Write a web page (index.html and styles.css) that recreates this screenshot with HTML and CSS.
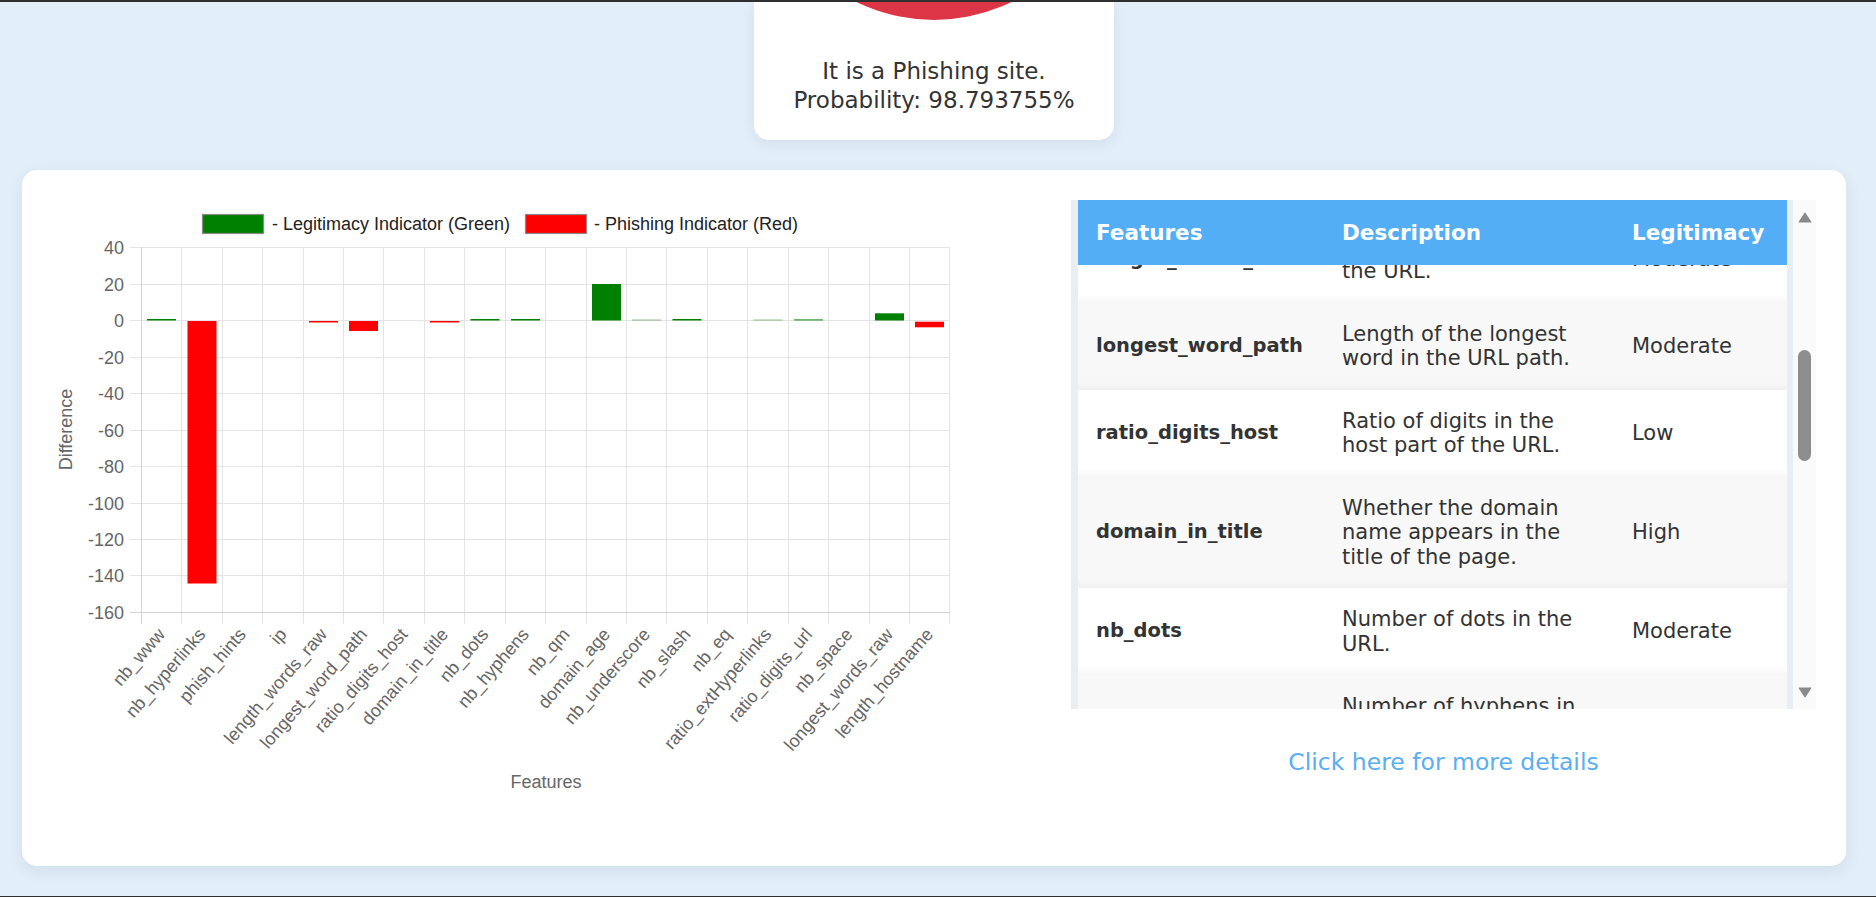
FILE: index.html
```html
<!DOCTYPE html>
<html lang="en">
<head>
<meta charset="utf-8">
<title>Phishing result</title>
<link rel="stylesheet" href="styles.css">
</head>
<body>
<div class="frame">
  <section class="result-card">
    <div class="gauge"></div>
    <p class="verdict">It is a Phishing site.<br>Probability: 98.793755%</p>
  </section>

  <section class="main-card">
    <div class="chart-col">
      <svg class="chart" width="908" height="636" viewBox="0 0 908 636">
        <!-- legend -->
        <rect x="156.5" y="14.5" width="61" height="19" fill="#008000" stroke="#8a8a8a" stroke-width="1.2"/>
        <text class="legend-text" x="226" y="24">- Legitimacy Indicator (Green)</text>
        <rect x="479.5" y="14.5" width="61" height="19" fill="#ff0000" stroke="#8a8a8a" stroke-width="1.2"/>
        <text class="legend-text" x="548" y="24">- Phishing Indicator (Red)</text>

        <!-- grid -->
        <g class="grid">
          <line x1="95.5" y1="47" x2="95.5" y2="424"/>
          <line x1="135.5" y1="47" x2="135.5" y2="424"/>
          <line x1="176.5" y1="47" x2="176.5" y2="424"/>
          <line x1="216.5" y1="47" x2="216.5" y2="424"/>
          <line x1="257.5" y1="47" x2="257.5" y2="424"/>
          <line x1="297.5" y1="47" x2="297.5" y2="424"/>
          <line x1="337.5" y1="47" x2="337.5" y2="424"/>
          <line x1="378.5" y1="47" x2="378.5" y2="424"/>
          <line x1="418.5" y1="47" x2="418.5" y2="424"/>
          <line x1="459.5" y1="47" x2="459.5" y2="424"/>
          <line x1="499.5" y1="47" x2="499.5" y2="424"/>
          <line x1="540.5" y1="47" x2="540.5" y2="424"/>
          <line x1="580.5" y1="47" x2="580.5" y2="424"/>
          <line x1="620.5" y1="47" x2="620.5" y2="424"/>
          <line x1="661.5" y1="47" x2="661.5" y2="424"/>
          <line x1="701.5" y1="47" x2="701.5" y2="424"/>
          <line x1="742.5" y1="47" x2="742.5" y2="424"/>
          <line x1="782.5" y1="47" x2="782.5" y2="424"/>
          <line x1="823.5" y1="47" x2="823.5" y2="424"/>
          <line x1="863.5" y1="47" x2="863.5" y2="424"/>
          <line x1="903.5" y1="47" x2="903.5" y2="424"/>

          <line x1="84" y1="47.5" x2="904" y2="47.5"/>
          <line x1="84" y1="84.5" x2="904" y2="84.5"/>
          <line x1="84" y1="120.5" x2="904" y2="120.5"/>
          <line x1="84" y1="157.5" x2="904" y2="157.5"/>
          <line x1="84" y1="193.5" x2="904" y2="193.5"/>
          <line x1="84" y1="230.5" x2="904" y2="230.5"/>
          <line x1="84" y1="266.5" x2="904" y2="266.5"/>
          <line x1="84" y1="303.5" x2="904" y2="303.5"/>
          <line x1="84" y1="339.5" x2="904" y2="339.5"/>
          <line x1="84" y1="375.5" x2="904" y2="375.5"/>
        </g>
        <g class="axis">
          <line x1="95.5" y1="47" x2="95.5" y2="424"/>
          <line x1="84" y1="412.5" x2="904" y2="412.5"/>
        </g>

        <!-- bars -->
        <g class="bars">
          <rect class="pos" x="101" y="119" width="29" height="1.5"/>
          <rect class="neg" x="141.5" y="121" width="29" height="262.5"/>
          <rect class="neg" x="263" y="121" width="29" height="1.5"/>
          <rect class="neg" x="303" y="121" width="29" height="10"/>
          <rect class="neg" x="384" y="121" width="29" height="1.5"/>
          <rect class="pos" x="424.5" y="119" width="29" height="1.5"/>
          <rect class="pos" x="465" y="119" width="29" height="1.5"/>
          <rect class="pos" x="546" y="84" width="29" height="36.5"/>
          <rect class="pos faint" x="586" y="119.5" width="29" height="1"/>
          <rect class="pos" x="626.5" y="119" width="29" height="1.5"/>
          <rect class="pos faint" x="707.5" y="119.5" width="29" height="1"/>
          <rect class="pos soft" x="748" y="119.3" width="29" height="1.2"/>
          <rect class="pos" x="829" y="113.3" width="29" height="7.2"/>
          <rect class="neg" x="869" y="121.7" width="29" height="5.6"/>
        </g>

        <!-- y ticks -->
        <g class="ytick">
          <text x="78" y="47.5">40</text>
          <text x="78" y="84.5">20</text>
          <text x="78" y="120.5">0</text>
          <text x="78" y="157.5">-20</text>
          <text x="78" y="193.5">-40</text>
          <text x="78" y="230.5">-60</text>
          <text x="78" y="266.5">-80</text>
          <text x="78" y="303.5">-100</text>
          <text x="78" y="339.5">-120</text>
          <text x="78" y="375.5">-140</text>
          <text x="78" y="412.5">-160</text>
        </g>

        <!-- x ticks -->
        <g class="xtick">
          <text transform="translate(115.5 431) rotate(-49)">nb_www</text>
          <text transform="translate(156 431) rotate(-49)">nb_hyperlinks</text>
          <text transform="translate(196.5 431) rotate(-49)">phish_hints</text>
          <text transform="translate(237 431) rotate(-49)">ip</text>
          <text transform="translate(277.5 431) rotate(-49)">length_words_raw</text>
          <text transform="translate(317.5 431) rotate(-49)">longest_word_path</text>
          <text transform="translate(358 431) rotate(-49)">ratio_digits_host</text>
          <text transform="translate(398.5 431) rotate(-49)">domain_in_title</text>
          <text transform="translate(439 431) rotate(-49)">nb_dots</text>
          <text transform="translate(479.5 431) rotate(-49)">nb_hyphens</text>
          <text transform="translate(520 431) rotate(-49)">nb_qm</text>
          <text transform="translate(560.5 431) rotate(-49)">domain_age</text>
          <text transform="translate(600.5 431) rotate(-49)">nb_underscore</text>
          <text transform="translate(641 431) rotate(-49)">nb_slash</text>
          <text transform="translate(681.5 431) rotate(-49)">nb_eq</text>
          <text transform="translate(722 431) rotate(-49)">ratio_extHyperlinks</text>
          <text transform="translate(762.5 431) rotate(-49)">ratio_digits_url</text>
          <text transform="translate(803 431) rotate(-49)">nb_space</text>
          <text transform="translate(843.5 431) rotate(-49)">longest_words_raw</text>
          <text transform="translate(883.5 431) rotate(-49)">length_hostname</text>
        </g>

        <text class="axis-title" transform="translate(20 229.5) rotate(-90)">Difference</text>
        <text class="axis-title" x="500" y="581.5">Features</text>
      </svg>
    </div>

    <div class="table-col">
      <div class="table-box">
        <div class="table-view">
          <div class="thead">
            <span>Features</span>
            <span>Description</span>
            <span>Legitimacy</span>
          </div>
          <div class="tbody">
            <div class="row">
              <div class="feat">length_words_raw</div>
              <div>Count of raw words in the URL.</div>
              <div>Moderate</div>
            </div>
            <div class="row">
              <div class="feat">longest_word_path</div>
              <div>Length of the longest word in the URL path.</div>
              <div>Moderate</div>
            </div>
            <div class="row">
              <div class="feat">ratio_digits_host</div>
              <div>Ratio of digits in the host part of the URL.</div>
              <div>Low</div>
            </div>
            <div class="row">
              <div class="feat">domain_in_title</div>
              <div>Whether the domain name appears in the title of the page.</div>
              <div>High</div>
            </div>
            <div class="row">
              <div class="feat">nb_dots</div>
              <div>Number of dots in the URL.</div>
              <div>Moderate</div>
            </div>
            <div class="row">
              <div class="feat">nb_hyphens</div>
              <div>Number of hyphens in the URL.</div>
              <div>Moderate</div>
            </div>
          </div>
        </div>
        <div class="scrollbar">
          <svg class="sb-up" width="14" height="11" viewBox="0 0 14 11"><path d="M7 1.2 L12.8 10 H1.2 Z"/></svg>
          <div class="sb-thumb"></div>
          <svg class="sb-down" width="14" height="11" viewBox="0 0 14 11"><path d="M7 9.8 L12.8 1 H1.2 Z"/></svg>
        </div>
      </div>
      <a class="more-link" href="#">Click here for more details</a>
    </div>
  </section>
</div>
</body>
</html>
```

FILE: styles.css
```css
html, body {
  margin: 0;
  padding: 0;
}

body {
  background: #e2eef8;
  font-family: "DejaVu Sans", "Liberation Sans", sans-serif;
  color: #333;
}

.frame {
  height: 894px;
  border-top: 2px solid #2f2f2f;
  border-bottom: 1px solid #2f2f2f;
  padding: 0 30px 0 22px;
  overflow: hidden;
}

/* top result card */
.result-card {
  width: 360px;
  height: 138px;
  margin-left: 732px;
  background: #fff;
  border-radius: 0 0 15px 15px;
  box-shadow: 0 4px 14px rgba(40, 80, 120, 0.08);
  overflow: hidden;
}

.gauge {
  width: 352px;
  height: 352px;
  margin: -334px auto 0;
  border-radius: 50%;
  background: #dc3545;
}

.verdict {
  margin: 36.5px 0 0;
  text-align: center;
  font-size: 23px;
  line-height: 29px;
  color: #333;
}

/* main card */
.main-card {
  margin-top: 30px;
  height: 636px;
  padding: 30px 30px 30px 24px;
  background: #fff;
  border-radius: 15px;
  box-shadow: 0 5px 16px rgba(40, 80, 120, 0.09);
  display: grid;
  grid-template-columns: 908px 745px;
  column-gap: 117px;
}

/* chart */
.chart {
  display: block;
}

.chart text {
  font-family: "Liberation Sans", Arial, sans-serif;
  font-size: 18px;
  fill: #666;
}

.chart .legend-text {
  fill: #222;
  dominant-baseline: central;
}

.grid line {
  stroke: #e4e4e4;
  stroke-width: 1;
  shape-rendering: crispEdges;
}

.axis line {
  stroke: #d4d4d4;
  stroke-width: 1;
  shape-rendering: crispEdges;
}

.bars .pos {
  fill: #008000;
}

.bars .neg {
  fill: #ff0000;
}

.bars .faint {
  opacity: 0.45;
}

.bars .soft {
  opacity: 0.8;
}

.ytick text {
  text-anchor: end;
  dominant-baseline: central;
}

.xtick text {
  text-anchor: end;
  dominant-baseline: central;
}

.chart .axis-title {
  text-anchor: middle;
  dominant-baseline: central;
}

/* table */
.table-col {
  display: flex;
  flex-direction: column;
}

.table-box {
  display: flex;
  height: 509px;
  padding-left: 7px;
  background: #e9eef3;
}

.table-view {
  width: 709px;
  flex: none;
  overflow: hidden;
  display: flex;
  flex-direction: column;
}

.thead {
  position: relative;
  z-index: 1;
  flex: none;
  height: 65px;
  display: grid;
  grid-template-columns: 246px 290px 1fr;
  align-items: center;
  background: #53aef5;
  color: #fff;
  font-weight: bold;
  font-size: 21.5px;
}

.thead span {
  padding: 0 18px;
}

.tbody {
  flex: none;
  margin-top: -49.3px;
}

.row {
  display: grid;
  grid-template-columns: 246px 290px 1fr;
  align-items: center;
  padding: 19px 0;
  font-size: 21px;
  line-height: 24.5px;
  background: #fff;
  box-shadow: inset 0 -12px 12px -12px rgba(0, 0, 0, 0.07);
}

.row:nth-child(even) {
  background-color: #f8f8f8;
}

.row > div {
  padding: 0 18px;
}

.row .feat {
  font-weight: bold;
  font-size: 19.5px;
}

/* fake scrollbar */
.scrollbar {
  width: 23px;
  flex: none;
  margin-left: 6px;
  background: #fafafa;
  display: flex;
  flex-direction: column;
  align-items: center;
}

.scrollbar svg path {
  fill: #8a8a8a;
  stroke: #8a8a8a;
  stroke-width: 1.2;
  stroke-linejoin: round;
}

.sb-up {
  margin-top: 12px;
  flex: none;
}

.sb-thumb {
  width: 13px;
  height: 111px;
  margin-top: 127px;
  border-radius: 7px;
  background: #8d8d8d;
  flex: none;
}

.sb-down {
  margin-top: auto;
  margin-bottom: 11px;
  flex: none;
}

.more-link {
  display: block;
  margin-top: 39px;
  text-align: center;
  font-size: 23.5px;
  line-height: 29px;
  color: #5aaef3;
  text-decoration: none;
}
```
